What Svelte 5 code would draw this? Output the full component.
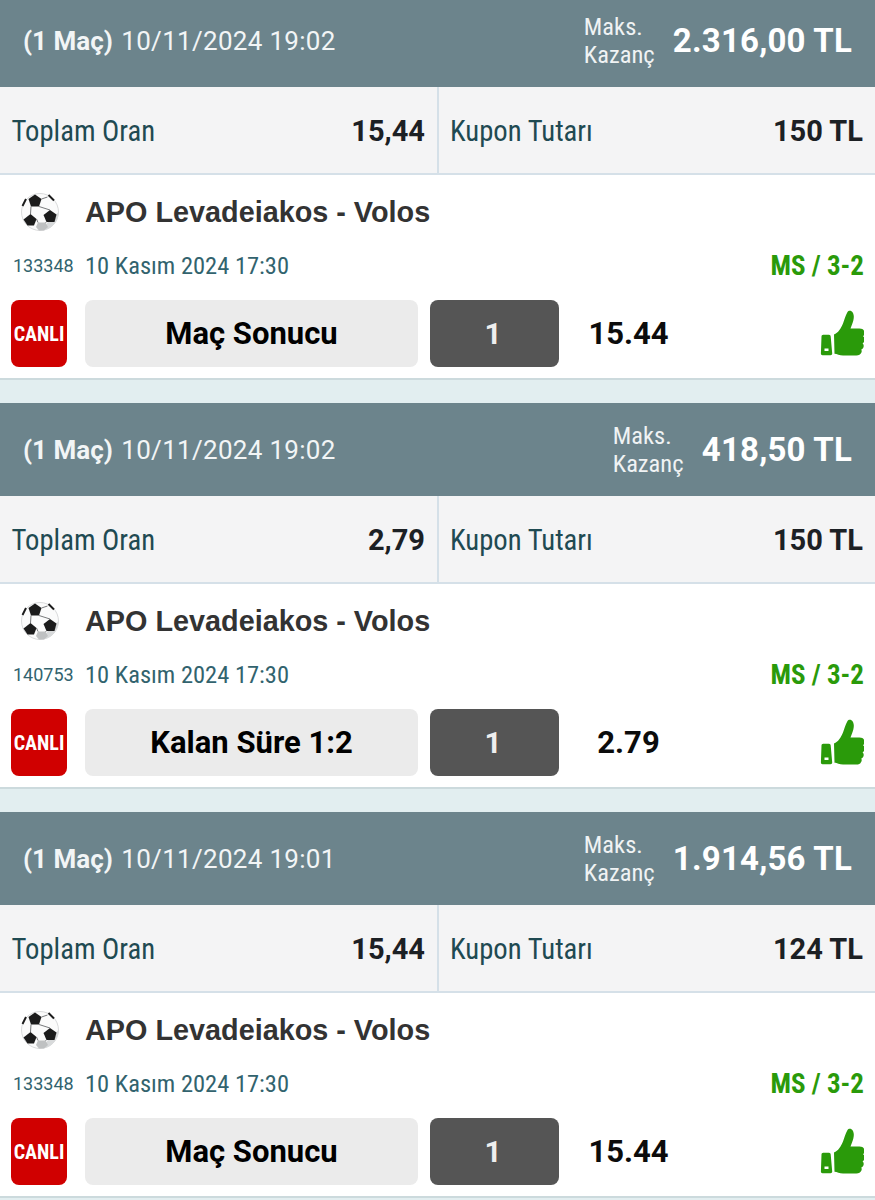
<script lang="ts">
	const coupons = [
		{ date: '10/11/2024 19:02', max: '2.316,00 TL', total: '15,44', stake: '150 TL', code: '133348', period: 'Maç Sonucu', odd: '15.44' },
		{ date: '10/11/2024 19:02', max: '418,50 TL', total: '2,79', stake: '150 TL', code: '140753', period: 'Kalan Süre 1:2', odd: '2.79' },
		{ date: '10/11/2024 19:01', max: '1.914,56 TL', total: '15,44', stake: '124 TL', code: '133348', period: 'Maç Sonucu', odd: '15.44' }
	];
</script>

<div class="page">
	{#each coupons as c}
		<section class="coupon">
			<header class="head">
				<div class="when"><b>(1 Maç)</b> <span class="date">{c.date}</span></div>
				<div class="max-label">Maks.<br />Kazanç</div>
				<div class="max">{c.max}</div>
			</header>

			<div class="stats">
				<div class="stat">
					<span class="stat-label">Toplam Oran</span>
					<span class="stat-value">{c.total}</span>
				</div>
				<div class="stat">
					<span class="stat-label">Kupon Tutarı</span>
					<span class="stat-value">{c.stake}</span>
				</div>
			</div>

			<div class="match">
				<div class="title-row">
					<svg class="ball" viewBox="0 0 40 40" aria-hidden="true">
						<circle cx="20" cy="20" r="18.500" fill="#fbfbfb" stroke="#cfd1d2" stroke-width=".8" />
						<path d="M38.500 20a18.500 18.500 0 0 1-14 18l-1-2 4.500-6 6-1 2.500-7z" fill="#d8dadb" />
						<path d="M15 2.500L21.500 7 19 14.500h-8L8.500 7z" fill="#1b1b1b" />
						<path d="M30 18l6.500 4.500-2 7.500h-8l-3-7z" fill="#1b1b1b" />
						<path d="M10.500 22l6 5-2.500 6.500H7.500l-4-6z" fill="#1b1b1b" />
						<path d="M16 35l2-4.500h7.500l2.500 4.500-4 3.500h-5z" fill="#bfc1c2" />
						<path d="M19 14.500L30 18M11 14.500l-.5 7.500M16.500 27l1.500 3.500M26.500 30l-1 .5M21.500 7l6-2" stroke="#55585a" stroke-width=".8" fill="none" />
						<path d="M2.500 14l3.500-7" stroke="#1b1b1b" stroke-width="2" fill="none" />
						<path d="M28.500 3l5.500 5.500" stroke="#1b1b1b" stroke-width="2" fill="none" />
					</svg>
					<span class="teams">APO Levadeiakos - Volos</span>
				</div>

				<div class="meta-row">
					<span class="code">{c.code}</span>
					<span class="kickoff">10 Kasım 2024 17:30</span>
					<span class="pick">MS / 3-2</span>
				</div>

				<div class="bet-row">
					<div class="live">CANLI</div>
					<div class="market">{c.period}</div>
					<div class="outcome">1</div>
					<div class="odd">{c.odd}</div>
					<svg class="thumb" viewBox="0 0 44 48" aria-hidden="true">
						<path d="M1.500 26.500c0-1 .7-1.700 1.700-1.700h5.800c1 0 1.600.7 1.700 1.700l1.500 17c0 1-.7 1.700-1.700 1.700H2.500c-1 0-1.600-.7-1.600-1.700z" fill="#2a9a0a" />
						<rect x="4.500" y="38.500" width="4" height="2.500" fill="#fff" />
						<path d="M14 24.500c4-1.500 7-6 9-11 1.500-4 2.500-8 4.500-11.500 1-1.700 4-1.600 5.200.4 2 3.300 1 8-.5 11.600l-1.700 4.500h9c3.200 0 5 1.700 5 4.200 0 1.500-.6 2.700-1.500 3.500 1.400 1 2 2.300 1.800 3.800-.2 1.500-1 2.600-2.200 3.300 1 1 1.300 2.200 1 3.500-.3 1.300-1.100 2.300-2.300 2.800.5 1 .5 2 .1 3-.8 2-2.700 3-5 3H23c-3.500 0-6-1.800-8.500-1.800z" fill="#2a9a0a" />
					</svg>
				</div>
			</div>
		</section>
	{/each}
</div>

<style>
	:global(body) {
		background: #e2eef0;
	}

	.page {
		display: flex;
		flex-direction: column;
		gap: 23px;
		margin-top: -6px;
		font-family: Roboto, 'Liberation Sans', sans-serif;
	}

	.coupon {
		background: #fff;
		border-bottom: 2px solid #ccdadd;
	}

	.head {
		height: 93px;
		display: flex;
		align-items: center;
		padding: 0 23px;
		background: #6c848c;
		color: #fff;
	}

	.when {
		flex: 1;
		font-size: 26px;
		color: #f2f5f6;
	}

	.when b {
		font-weight: 700;
	}

	.date {
		margin-left: 2px;
		letter-spacing: 0.3px;
	}

	.max-label {
		width: 89px;
		font-size: 24.5px;
		font-stretch: 85%;
		line-height: 28px;
		color: #f0f3f4;
	}

	.max {
		font-size: 33px;
		font-weight: 700;
		letter-spacing: 0.2px;
	}

	.stats {
		display: grid;
		grid-template-columns: 439px 1fr;
		height: 88px;
		background: #f4f4f5;
		border-bottom: 2px solid #d5e0e8;
		box-sizing: border-box;
	}

	.stat {
		display: flex;
		align-items: center;
		justify-content: space-between;
		padding: 2px 12px 0 11px;
	}

	.stat:first-child {
		border-right: 2px solid #d5e0e8;
		padding-left: 11.500px;
	}

	.stat-label {
		font-size: 28.700px;
		font-stretch: 85%;
		color: #1f4a52;
	}

	.stat-value {
		font-size: 29px;
		font-weight: 700;
		color: #1c2024;
	}

	.match {
		height: 203px;
		box-sizing: border-box;
		padding: 0 11px;
		display: flex;
		flex-direction: column;
	}

	.title-row {
		height: 74px;
		display: flex;
		align-items: center;
	}

	.ball {
		width: 40px;
		height: 40px;
		margin: 0 25px 0 9px;
		flex: none;
	}

	.teams {
		font-family: 'Liberation Sans', Roboto, sans-serif;
		font-size: 28.800px;
		font-weight: 700;
		color: #333;
	}

	.meta-row {
		height: 34px;
		display: flex;
		align-items: center;
		color: #32636e;
	}

	.code {
		width: 74px;
		padding: 0 0 2px 2px;
		box-sizing: border-box;
		font-size: 18px;
	}

	.kickoff {
		flex: 1;
		padding-bottom: 2px;
		font-size: 24.500px;
		font-stretch: 85%;
	}

	.pick {
		font-size: 27px;
		font-weight: 700;
		font-stretch: 85%;
		color: #2a9a0a;
	}

	.bet-row {
		margin-top: 17px;
		height: 67px;
		display: grid;
		grid-template-columns: 56px 351px 141px 139px 1fr;
		align-items: center;
	}

	.live {
		height: 67px;
		border-radius: 8px;
		background: #d00000;
		color: #fff;
		font-size: 20px;
		font-weight: 700;
		font-stretch: 85%;
		display: flex;
		align-items: center;
		justify-content: center;
	}

	.market {
		height: 67px;
		margin-left: 18px;
		border-radius: 8px;
		background: #ebebeb;
		color: #000;
		font-size: 31px;
		font-weight: 700;
		display: flex;
		align-items: center;
		justify-content: center;
	}

	.outcome {
		height: 67px;
		margin-left: 12px;
		padding-right: 3px;
		border-radius: 8px;
		background: #555;
		color: #eee;
		font-size: 30px;
		font-weight: 700;
		display: flex;
		align-items: center;
		justify-content: center;
	}

	.odd {
		text-align: center;
		font-size: 31px;
		font-weight: 700;
		color: #0c0c0c;
	}

	.thumb {
		width: 44px;
		height: 48px;
		justify-self: end;
	}
</style>
